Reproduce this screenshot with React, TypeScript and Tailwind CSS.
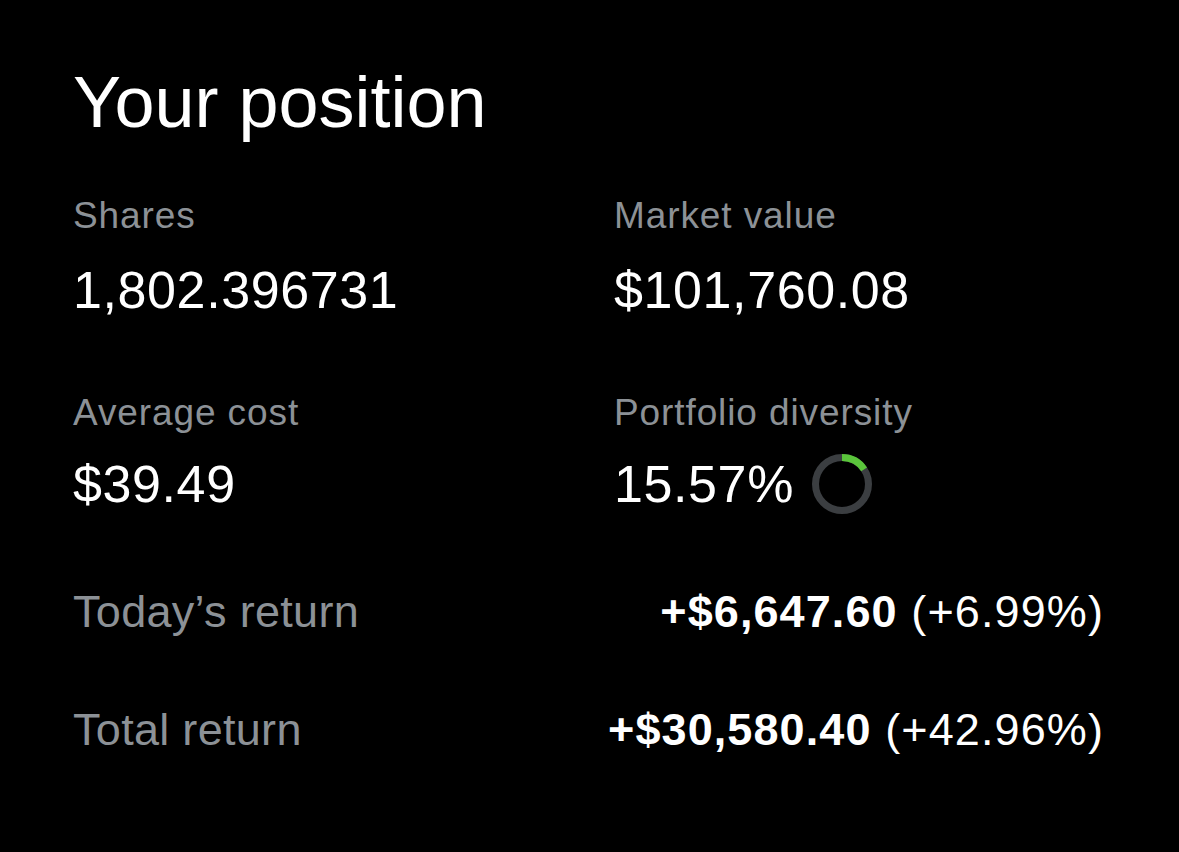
import React from "react";

const labelCls = "text-[37px] leading-none tracking-[0.9px] text-[#8c9196]";
const valueCls = "text-[52px] leading-none tracking-[0.6px] text-white";

function DiversityRing({ pct }: { pct: number }) {
  const r = 26.5;
  const c = 2 * Math.PI * r;
  return (
    <svg width="60" height="60" viewBox="0 0 60 60" className="shrink-0">
      <circle cx="30" cy="30" r={r} fill="none" stroke="#3b3e41" strokeWidth="7" />
      <circle
        cx="30"
        cy="30"
        r={r}
        fill="none"
        stroke="#5ac53b"
        strokeWidth="7"
        strokeDasharray={`${(c * pct) / 100} ${c}`}
        transform="rotate(-90 30 30)"
      />
    </svg>
  );
}

function Stat({ label, value, extra, gap }: { label: string; value: string; extra?: React.ReactNode; gap: string }) {
  return (
    <div>
      <div className={labelCls}>{label}</div>
      <div className={`${gap} flex h-[52px] items-center gap-[18px]`}>
        <span className={valueCls}>{value}</span>
        {extra}
      </div>
    </div>
  );
}

function ReturnRow({ label, amount, pct, className }: { label: string; amount: string; pct: string; className?: string }) {
  return (
    <div className={`flex items-baseline justify-between ${className ?? ""}`}>
      <span className="text-[45px] leading-none tracking-[0.3px] text-[#8c9196]">{label}</span>
      <span className="whitespace-nowrap text-[45px] leading-none tracking-[1.1px] text-white">
        <span className="font-bold">{amount}</span> {pct}
      </span>
    </div>
  );
}

export default function App() {
  return (
    <div className="min-h-screen bg-black pl-[73px] pr-[75px] pt-[66px] font-['Liberation_Sans',Arial,sans-serif]">
      <h1 className="text-[72px] font-normal leading-none text-white">Your position</h1>

      <div className="mt-[59px] grid grid-cols-[541px_1fr]">
        <Stat label="Shares" value="1,802.396731" gap="mt-[30px]" />
        <Stat label="Market value" value="$101,760.08" gap="mt-[30px]" />
      </div>

      <div className="mt-[78px] grid grid-cols-[541px_1fr]">
        <Stat label="Average cost" value="$39.49" gap="mt-[27px]" />
        <Stat label="Portfolio diversity" value="15.57%" gap="mt-[27px]" extra={<DiversityRing pct={15.57} />} />
      </div>

      <ReturnRow className="mt-[79px]" label="Today’s return" amount="+$6,647.60" pct="(+6.99%)" />
      <ReturnRow className="mt-[73px]" label="Total return" amount="+$30,580.40" pct="(+42.96%)" />
    </div>
  );
}
